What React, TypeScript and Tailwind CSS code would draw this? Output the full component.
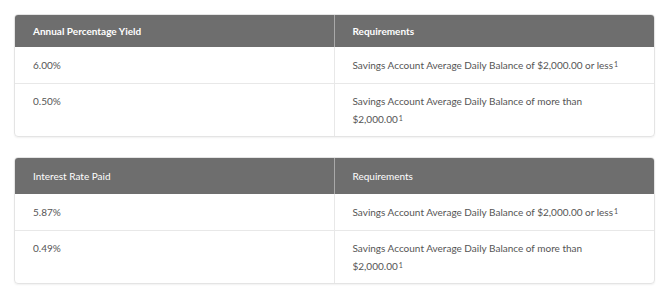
import React from 'react';

type Row = { rate: string; req: React.ReactNode };

const Sup = () => <sup className="text-[7px] relative -top-[2px] ml-[1px]">1</sup>;

const apyRows: Row[] = [
  { rate: '6.00%', req: <>Savings Account Average Daily Balance of $2,000.00 or less<Sup /></> },
  { rate: '0.50%', req: <>Savings Account Average Daily Balance of more than<br />$2,000.00<Sup /></> },
];

const interestRows: Row[] = [
  { rate: '5.87%', req: <>Savings Account Average Daily Balance of $2,000.00 or less<Sup /></> },
  { rate: '0.49%', req: <>Savings Account Average Daily Balance of more than<br />$2,000.00<Sup /></> },
];

const RateTable: React.FC<{ title: string; rows: Row[]; bold?: boolean }> = ({ title, rows, bold }) => {
  const headCell = bold ? 'px-[18px] py-[7px] leading-[18px]' : 'px-[18px] py-[9px] leading-[18px]';
  return (
    <div className="border border-[#e4e4e4] rounded-[4px] overflow-hidden shadow-[0_1px_2px_rgba(0,0,0,0.06)]">
      <div className={`grid grid-cols-2 bg-[#6e6e6e] text-white ${bold ? 'font-bold' : 'font-normal'}`}>
        <div className={`${headCell} border-r border-[#a9a9a9]`}>{title}</div>
        <div className={headCell}>Requirements</div>
      </div>
      {rows.map((r, i) => {
        const cell = `px-[18px] leading-[18px] ${i > 0 ? 'py-[8px]' : 'py-[9px]'}`;
        return (
          <div key={r.rate} className={`grid grid-cols-2 text-[#555] ${i > 0 ? 'border-t border-[#e8e8e8]' : ''}`}>
            <div className={`${cell} border-r border-[#e8e8e8]`}>{r.rate}</div>
            <div className={cell}>{r.req}</div>
          </div>
        );
      })}
    </div>
  );
};

export default function App() {
  return (
    <div className="bg-white w-[670px] h-[298px] pt-[14px] pl-[14px] pr-[15px] font-['Lato',sans-serif] text-[10px]">
      <div className="flex flex-col gap-[20px]">
        <RateTable title="Annual Percentage Yield" rows={apyRows} bold />
        <RateTable title="Interest Rate Paid" rows={interestRows} />
      </div>
    </div>
  );
}
